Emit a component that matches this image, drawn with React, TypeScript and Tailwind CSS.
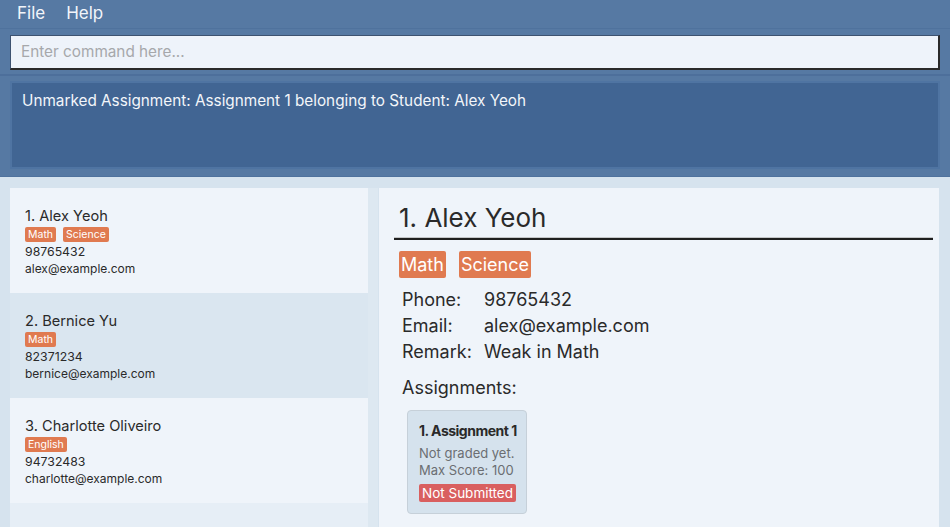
const people = [
  { name: "1. Alex Yeoh", tags: ["Math", "Science"], phone: "98765432", email: "alex@example.com", bg: "bg-[#eff4fa]" },
  { name: "2. Bernice Yu", tags: ["Math"], phone: "82371234", email: "bernice@example.com", bg: "bg-[#dae6f0]" },
  { name: "3. Charlotte Oliveiro", tags: ["English"], phone: "94732483", email: "charlotte@example.com", bg: "bg-[#eff4fa]" },
];

function PersonCard({ p }: { p: (typeof people)[number] }) {
  return (
    <div className={`${p.bg} h-[105px] shrink-0 pl-[15px] pt-[19px] text-[#2a2a2a]`}>
      <div className="text-[14.6px] leading-[19px]">{p.name}</div>
      <div className="flex gap-[7px] mt-[1px]">
        {p.tags.map((t) => (
          <span key={t} className="bg-[#e07a50] text-white text-[10.5px] leading-[15px] px-[3px] rounded-[2px]">
            {t}
          </span>
        ))}
      </div>
      <div className="text-[12.3px] leading-[17px] mt-[1px]">{p.phone}</div>
      <div className="text-[12px] leading-[17px]">{p.email}</div>
    </div>
  );
}

export default function App() {
  return (
    <div className="w-[950px] h-[527px] overflow-hidden flex flex-col bg-[#d6e3ee] font-['Inter',sans-serif]">
      <div className="bg-[#5679a3]">
        <div className="h-[29px] flex items-center gap-[21px] pl-[17px] text-[17px] text-[#f2f5fa] border-b border-[#4f729d]">
          <span>File</span>
          <span>Help</span>
        </div>
        <div className="h-[47px] pt-[6px] px-[10px] border-b-2 border-[#4d6f9b]">
          <div className="h-[35px] bg-[#eef3fa] border border-[#3d5270] border-b-2 border-r-2 border-b-[#2a2a2a] border-r-[#2a2a2a] flex items-center pl-[10px] text-[15.3px] text-[#a6a8ab]">
            Enter command here...
          </div>
        </div>
        <div className="h-[101px] pt-[5px] px-[10px] border-b border-[#4f729d]">
          <div className="h-[88px] bg-[#416593] border-2 border-[#4f74a2] pl-[10px] pt-[6px] text-[15.3px] leading-[24px] text-[#f3f6fa]">
            Unmarked Assignment: Assignment 1 belonging to Student: Alex Yeoh
          </div>
        </div>
      </div>
      <div className="flex-1 flex pt-[11px] pl-[10px] pr-[11px] gap-[1px] min-h-0">
        <div className="w-[368px] flex bg-[#dde8f1]">
          <div className="w-[358px] flex flex-col bg-[#e6eef6]">
            {people.map((p) => (
              <PersonCard key={p.name} p={p} />
            ))}
          </div>
        </div>
        <div className="flex-1 bg-[#eff4fa] pl-[15px] pr-[6px] pt-[14px] text-[#2a2a2a]">
          <div className="text-[26px] leading-[32px] pl-[5px]">1. Alex Yeoh</div>
          <div className="h-[3px] mt-[3px] border-t border-[#c4c6c8] border-b-2 border-b-[#1f1f1f]" />
          <div className="flex gap-[13px] mt-[11px] pl-[5px]">
            {["Math", "Science"].map((t) => (
              <span key={t} className="bg-[#e07a50] text-white text-[18px] leading-[27px] px-[2px] rounded-[2px]">
                {t}
              </span>
            ))}
          </div>
          <div className="mt-[9px] pl-[8px] text-[18px] leading-[26px]">
            {[
              ["Phone:", "98765432"],
              ["Email:", "alex@example.com"],
              ["Remark:", "Weak in Math"],
            ].map(([k, v]) => (
              <div key={k} className="flex">
                <span className="w-[82px]">{k}</span>
                <span>{v}</span>
              </div>
            ))}
          </div>
          <div className="mt-[10px] pl-[8px] text-[18px] leading-[26px]">Assignments:</div>
          <div className="mt-[9px] ml-[13px] w-[120px] h-[104px] bg-[#d5e2ed] border border-[#c6d0d9] rounded-[4px] pl-[11px] pt-[11px]">
            <div className="text-[14px] leading-[18px] font-bold tracking-[-0.5px]">1. Assignment 1</div>
            <div className="text-[13px] leading-[17px] text-[#6b6e72] mt-[5px]">Not graded yet.</div>
            <div className="text-[13px] leading-[17px] text-[#6b6e72]">Max Score: 100</div>
            <span className="inline-block mt-[5px] bg-[#d95f5f] text-white text-[13.5px] leading-[18px] px-[3px] rounded-[2px]">
              Not Submitted
            </span>
          </div>
        </div>
      </div>
    </div>
  );
}
